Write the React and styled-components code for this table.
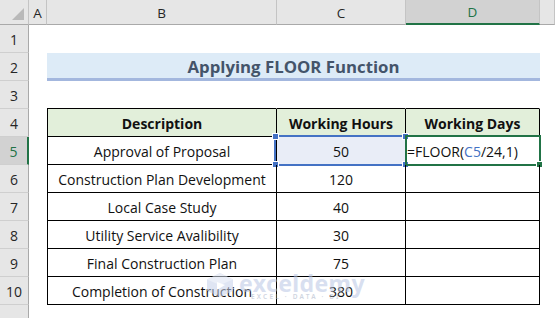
import React from 'react';
import styled, { createGlobalStyle } from 'styled-components';

const GlobalStyle = createGlobalStyle`
  body {
    margin: 0;
    background: #ffffff;
    font-family: "Open Sans", "Liberation Sans", sans-serif;
  }
`;

const COLS = '29px 18px 230px 129px 134px 1fr';
const GREEN = '#217346';
const BLUE = '#4472c4';

const Sheet = styled.div`
  position: relative;
  width: 555px;
  height: 318px;
  overflow: hidden;
  display: flex;
  flex-direction: column;
  background: #fff;
`;

const Row = styled.div`
  display: grid;
  grid-template-columns: ${COLS};
  height: ${(p) => p.$h || 28}px;
  flex: none;
`;

const Corner = styled.div`
  position: relative;
  background: #e6e6e6;
  border-right: 1px solid #c4c4c4;
  border-bottom: 1px solid #a9a9a9;
  &::after {
    content: '';
    position: absolute;
    right: 4px;
    bottom: 4px;
    width: 0;
    height: 0;
    border-left: 12px solid transparent;
    border-bottom: 12px solid #b9b9b9;
  }
`;

const ColHead = styled.div`
  display: flex;
  align-items: center;
  justify-content: center;
  background: ${(p) => (p.$active ? '#d2d2d2' : '#e6e6e6')};
  color: ${(p) => (p.$active ? GREEN : '#262626')};
  border-right: 1px solid #c4c4c4;
  border-bottom: ${(p) => (p.$active ? `2px solid ${GREEN}` : '1px solid #a9a9a9')};
  font-size: 13.5px;
  padding-top: 1px;
`;

const RowHead = styled.div`
  display: flex;
  align-items: center;
  justify-content: center;
  background: ${(p) => (p.$active ? '#d2d2d2' : '#e6e6e6')};
  color: ${(p) => (p.$active ? GREEN : '#262626')};
  border-right: ${(p) => (p.$active ? `2px solid ${GREEN}` : '1px solid #a9a9a9')};
  border-bottom: 1px solid #cfcfcf;
  font-size: 14px;
  padding-top: 2px;
  box-sizing: border-box;
`;

const Cell = styled.div`
  position: relative;
  box-sizing: border-box;
  display: flex;
  align-items: center;
  justify-content: ${(p) => (p.$align === 'left' ? 'flex-start' : 'center')};
  padding: 2px 0 0 ${(p) => (p.$align === 'left' ? '1px' : '0')};
  background: ${(p) => p.$bg || 'transparent'};
  border-left: ${(p) => (p.$l ? '1px solid #000' : 'none')};
  border-right: 1px solid ${(p) => p.$r || 'transparent'};
  border-bottom: 1px solid ${(p) => p.$b || 'transparent'};
  font-size: 14px;
  font-weight: ${(p) => (p.$bold ? 700 : 400)};
  color: #111;
  white-space: nowrap;
`;

const TitleCell = styled.div`
  grid-column: 3 / span 3;
  display: flex;
  align-items: center;
  justify-content: center;
  background: #ddebf7;
  border-bottom: 3px solid #a3b7de;
  box-sizing: border-box;
  padding-top: 1px;
  font-size: 16.8px;
  font-weight: 700;
  color: #44546a;
`;

const RefBox = styled.div`
  position: absolute;
  left: -3px;
  right: -2px;
  top: -2px;
  bottom: -2px;
  border: 2px solid ${BLUE};
  pointer-events: none;
`;

const ActiveBox = styled.div`
  position: absolute;
  left: -1px;
  right: -2px;
  top: -2px;
  bottom: -2px;
  border: 2px solid ${GREEN};
  pointer-events: none;
`;

const Handle = styled.span`
  position: absolute;
  width: 5px;
  height: 5px;
  background: ${(p) => p.$color};
  border: 1px solid #fff;
  ${(p) => (p.$top ? 'top: -4px;' : 'bottom: -4px;')}
  ${(p) => (p.$left ? 'left: -4px;' : 'right: -4px;')}
`;

const Ref = styled.span`
  color: ${BLUE};
`;

const Watermark = styled.div`
  position: absolute;
  left: 204px;
  top: 272px;
  display: flex;
  align-items: flex-start;
  gap: 3px;
  opacity: 0.55;
  pointer-events: none;
`;

const MarkText = styled.div`
  display: flex;
  flex-direction: column;
  line-height: 1;
`;

const MarkName = styled.span`
  font-family: "Noto Sans", "Open Sans", sans-serif;
  font-size: 23px;
  font-weight: 700;
  color: #b9c6e4;
  letter-spacing: 0.4px;
`;

const MarkTag = styled.span`
  font-family: "Noto Sans", sans-serif;
  font-size: 6.5px;
  font-weight: 600;
  color: #aab4c8;
  letter-spacing: 2.2px;
  margin-left: 12px;
  margin-top: -1px;
`;

const data = [
  ['Approval of Proposal', 50],
  ['Construction Plan Development', 120],
  ['Local Case Study', 40],
  ['Utility Service Avalibility', 30],
  ['Final Construction Plan', 75],
  ['Completion of Construction', 380],
];

function Logo() {
  return (
    <svg width="32" height="26" viewBox="0 0 32 26">
      <polygon points="16,1 29,7.5 29,19 16,25 3,19 3,7.5" fill="#c6d1ea" />
      <polygon points="16,1 29,7.5 16,13 3,7.5" fill="#dbe3f3" />
      <polygon points="13,10 21,13 13,18" fill="#ffffff" />
    </svg>
  );
}

export default function App() {
  return (
    <Sheet>
      <GlobalStyle />
      <Row $h={25}>
        <Corner />
        <ColHead>A</ColHead>
        <ColHead>B</ColHead>
        <ColHead>C</ColHead>
        <ColHead $active>D</ColHead>
        <ColHead />
      </Row>

      <Row>
        <RowHead>1</RowHead>
        <Cell /><Cell /><Cell /><Cell /><Cell />
      </Row>

      <Row>
        <RowHead>2</RowHead>
        <Cell />
        <TitleCell>Applying FLOOR Function</TitleCell>
        <Cell />
      </Row>

      <Row>
        <RowHead>3</RowHead>
        <Cell />
        <Cell $b="#000" /><Cell $b="#000" /><Cell $b="#000" />
        <Cell />
      </Row>

      <Row>
        <RowHead>4</RowHead>
        <Cell />
        <Cell $l $r="#000" $b="#000" $bg="#e2efda" $bold>Description</Cell>
        <Cell $r="#000" $b="#000" $bg="#e2efda" $bold>Working Hours</Cell>
        <Cell $r="#000" $b="#000" $bg="#e2efda" $bold>Working Days</Cell>
        <Cell />
      </Row>

      {data.map(([desc, hours], i) => {
        const first = i === 0;
        return (
          <Row key={desc}>
            <RowHead $active={first}>{i + 5}</RowHead>
            <Cell />
            <Cell $l $r="#000" $b="#000">{desc}</Cell>
            <Cell $r="#000" $b="#000" $bg={first ? '#e9edf7' : undefined}>
              {hours}
              {first && (
                <RefBox>
                  <Handle $color={BLUE} $top $left />
                  <Handle $color={BLUE} $top />
                  <Handle $color={BLUE} $left />
                  <Handle $color={BLUE} />
                </RefBox>
              )}
            </Cell>
            <Cell $r="#000" $b="#000" $align="left">
              {first && (
                <>
                  =FLOOR(<Ref>C5</Ref>/24,1)
                  <ActiveBox>
                    <Handle $color={GREEN} />
                  </ActiveBox>
                </>
              )}
            </Cell>
            <Cell />
          </Row>
        );
      })}

      <Row>
        <RowHead />
        <Cell /><Cell /><Cell /><Cell /><Cell />
      </Row>

      <Watermark>
        <Logo />
        <MarkText>
          <MarkName>exceldemy</MarkName>
          <MarkTag>EXCEL · DATA · BI</MarkTag>
        </MarkText>
      </Watermark>
    </Sheet>
  );
}
